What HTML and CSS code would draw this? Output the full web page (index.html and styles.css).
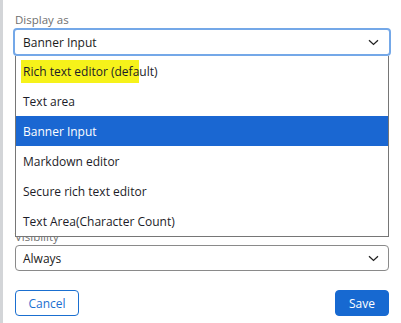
FILE: index.html
```html
<!DOCTYPE html>
<html>
<head>
<meta charset="utf-8">
<link rel="stylesheet" href="styles.css">
</head>
<body>
<div class="page">
  <div class="field field-display">
    <div class="label">Display as</div>
    <div class="select focused">
      <span>Banner Input</span>
      <svg class="chev" width="11" height="7" viewBox="0 0 11 7"><path d="M1 1.2 L5.5 5.4 L10 1.2" fill="none" stroke="#222" stroke-width="1.3"/></svg>
    </div>
    <ul class="menu">
      <li><mark>Rich text editor (defa</mark>ult)</li>
      <li>Text area</li>
      <li class="active">Banner Input</li>
      <li>Markdown editor</li>
      <li>Secure rich text editor</li>
      <li>Text Area(Character Count)</li>
    </ul>
  </div>
  <div class="field field-visibility">
    <div class="label">Visibility</div>
    <div class="select">
      <span>Always</span>
      <svg class="chev" width="11" height="7" viewBox="0 0 11 7"><path d="M1 1.2 L5.5 5.4 L10 1.2" fill="none" stroke="#222" stroke-width="1.3"/></svg>
    </div>
  </div>
  <div class="actions">
    <button class="btn btn-secondary">Cancel</button>
    <button class="btn btn-primary">Save</button>
  </div>
</div>
</body>
</html>
```
FILE: styles.css
```css
html, body {
  margin: 0;
  padding: 0;
  background: #fff;
}
body {
  font-family: "Open Sans", "Noto Sans", sans-serif;
  font-size: 12px;
  color: #1f1f1f;
}
.page {
  border-left: 3px solid #d3d5d8;
  min-height: 323px;
  box-sizing: border-box;
  padding: 11px 12px 0 12px;
}
.field {
  position: relative;
}
.label {
  font-size: 11.5px;
  line-height: 17px;
  color: #6f6f6f;
}
.select {
  height: 26px;
  box-sizing: border-box;
  border: 1px solid #8a8a8a;
  border-radius: 4px;
  display: flex;
  align-items: center;
  justify-content: space-between;
  padding: 0 9px 0 7px;
  color: #1b1b1b;
}
.select.focused {
  height: 28px;
  margin: 0 -2px;
  border: 2px solid #74a8e8;
  padding: 0 10px 0 8px;
}
.chev {
  display: block;
}
.menu {
  position: absolute;
  left: 0;
  right: 0;
  top: 45px;
  margin: 0;
  padding: 0;
  list-style: none;
  background: #fff;
  border: 1px solid #767676;
  border-top: 0;
  z-index: 2;
}
.menu li {
  height: 30px;
  display: flex;
  align-items: center;
  padding-left: 7px;
  padding-top: 1px;
  box-sizing: border-box;
  color: #1c1c28;
}
.menu li.active {
  background: #1a67d2;
  color: #fff;
}
mark {
  background: #f6f21a;
  color: inherit;
  padding: 3px 0 3px 2px;
  margin-left: -2px;
}
.field-visibility {
  margin-top: 173px;
}
.field-visibility .label {
  line-height: 16px;
}
.actions {
  display: flex;
  justify-content: space-between;
  margin-top: 19px;
}
.btn {
  font-family: inherit;
  font-size: 12px;
  height: 26px;
  border-radius: 4px;
  box-sizing: border-box;
  padding: 0;
  cursor: pointer;
}
.btn-secondary {
  width: 64px;
  background: #fff;
  border: 1px solid #1a6fd0;
  color: #1a6fd0;
}
.btn-primary {
  width: 54px;
  background: #1769d1;
  border: 1px solid #1769d1;
  color: #fff;
}
```
